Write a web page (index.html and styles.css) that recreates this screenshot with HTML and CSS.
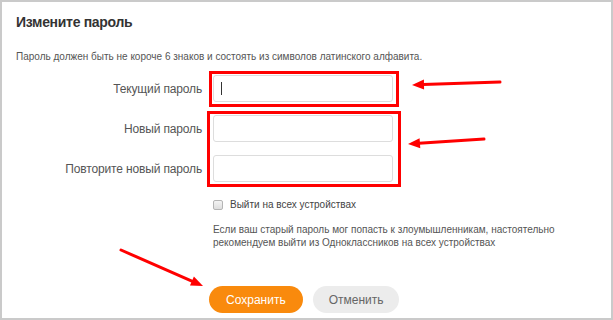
FILE: index.html
```html
<!DOCTYPE html>
<html>
	<head>
		<meta charset="utf-8" />
		<meta name="viewport" content="width=device-width, initial-scale=1.0" />
		<title>Измените пароль</title>
		<link rel="stylesheet" href="styles.css">
	</head>
	<body>
		<div class="screen">
			<div class="panel">
				<h1>Измените пароль</h1>
				<p class="hint">Пароль должен быть не короче 6 знаков и состоять из символов латинского алфавита.</p>

				<div class="fields">
					<label for="curPass">Текущий пароль</label>
					<div class="field has-caret"><input type="password" id="curPass" /><span class="caret"></span></div>

					<label for="newPass">Новый пароль</label>
					<div class="field"><input type="password" id="newPass" /></div>

					<label for="newPass2">Повторите новый пароль</label>
					<div class="field"><input type="password" id="newPass2" /></div>
				</div>

				<div class="extra">
					<label class="check">
						<input type="checkbox" />
						<span>Выйти на всех устройствах</span>
					</label>
					<p class="note">Если ваш старый пароль мог попасть к злоумышленникам, настоятельно рекомендуем выйти из Одноклассников на всех устройствах</p>

					<div class="buttons">
						<button class="btn primary">Сохранить</button>
						<button class="btn">Отменить</button>
					</div>
				</div>
			</div>

			<!-- annotation marks -->
			<div class="mark mark-current"></div>
			<div class="mark mark-new"></div>
			<svg class="arrows" width="613" height="320" viewBox="0 0 613 320">
				<g stroke="#f00" stroke-width="3" stroke-linecap="round" fill="#f00">
					<line x1="500" y1="82" x2="423" y2="84.6" />
					<line x1="484" y1="139" x2="419" y2="143.2" />
					<line x1="121" y1="250" x2="193" y2="281.6" />
				</g>
				<g fill="#f00">
					<polygon points="412,85 423.9,79.6 424.1,89.6" />
					<polygon points="408,144 419.6,138.2 420.3,148.2" />
					<polygon points="203,286 190,285.6 193.9,276.6" />
				</g>
			</svg>
		</div>
	</body>
</html>
```

FILE: styles.css
```css
html, body {
	margin: 0;
	padding: 0;
	background: #fff;
}

body {
	font-family: 'Liberation Sans', Arial, sans-serif;
	color: #333;
}

.screen {
	position: relative;
	width: 613px;
	height: 320px;
}

.panel {
	box-sizing: border-box;
	width: 613px;
	height: 320px;
	padding: 12px 14px 0;
	border: 2px solid #cacaca;
	background: #fff;
}

h1 {
	margin: 0;
	font-size: 14px;
	line-height: 16px;
	font-weight: bold;
	letter-spacing: -0.3px;
	color: #333;
}

.hint {
	margin: 20px 0 0;
	font-size: 10px;
	line-height: 14px;
	color: #555;
}

/* Form fields */
.fields {
	display: grid;
	grid-template-columns: 186px 180px;
	column-gap: 11px;
	row-gap: 13px;
	align-items: center;
	margin-top: 11px;
}

.fields label {
	text-align: right;
	font-size: 12px;
	line-height: 14px;
	letter-spacing: -0.15px;
	color: #555;
}

.field {
	position: relative;
	height: 27px;
}

.field input {
	box-sizing: border-box;
	width: 100%;
	height: 27px;
	margin: 0;
	padding: 0 8px;
	border: 1px solid #ddd;
	border-radius: 3px;
	background: #fff;
	outline: none;
}

.caret {
	position: absolute;
	left: 8px;
	top: 7px;
	width: 1px;
	height: 13px;
	background: #333;
}

/* Checkbox, note and buttons */
.extra {
	margin-left: 197px;
}

.check {
	display: flex;
	align-items: center;
	gap: 7px;
	margin-top: 16px;
	font-size: 10px;
	line-height: 14px;
	color: #444;
}

.check input {
	appearance: none;
	-webkit-appearance: none;
	box-sizing: border-box;
	width: 10px;
	height: 10px;
	margin: 0;
	border: 1px solid #b5b5b5;
	border-radius: 2px;
	background: linear-gradient(#f4f4f4, #dedede);
}

.note {
	width: 360px;
	margin: 11px 0 0;
	font-size: 10px;
	line-height: 13px;
	color: #555;
}

.buttons {
	display: flex;
	gap: 10px;
	margin-top: 37px;
	margin-left: -4px;
}

.btn {
	height: 27px;
	padding: 0 16px;
	border: none;
	border-radius: 14px;
	background: #ececec;
	color: #666;
	font-family: 'Liberation Sans', Arial, sans-serif;
	font-size: 12px;
	cursor: pointer;
}

.btn.primary {
	padding: 0 17px;
	background: #f98a0d;
	color: #fff;
}

/* Annotations drawn over the form */
.mark {
	position: absolute;
	box-sizing: border-box;
	border: 3px solid #f00;
}

.mark-current {
	left: 209px;
	top: 71px;
	width: 190px;
	height: 36px;
}

.mark-new {
	left: 207px;
	top: 111px;
	width: 194px;
	height: 76px;
}

.arrows {
	position: absolute;
	left: 0;
	top: 0;
	pointer-events: none;
}
```
